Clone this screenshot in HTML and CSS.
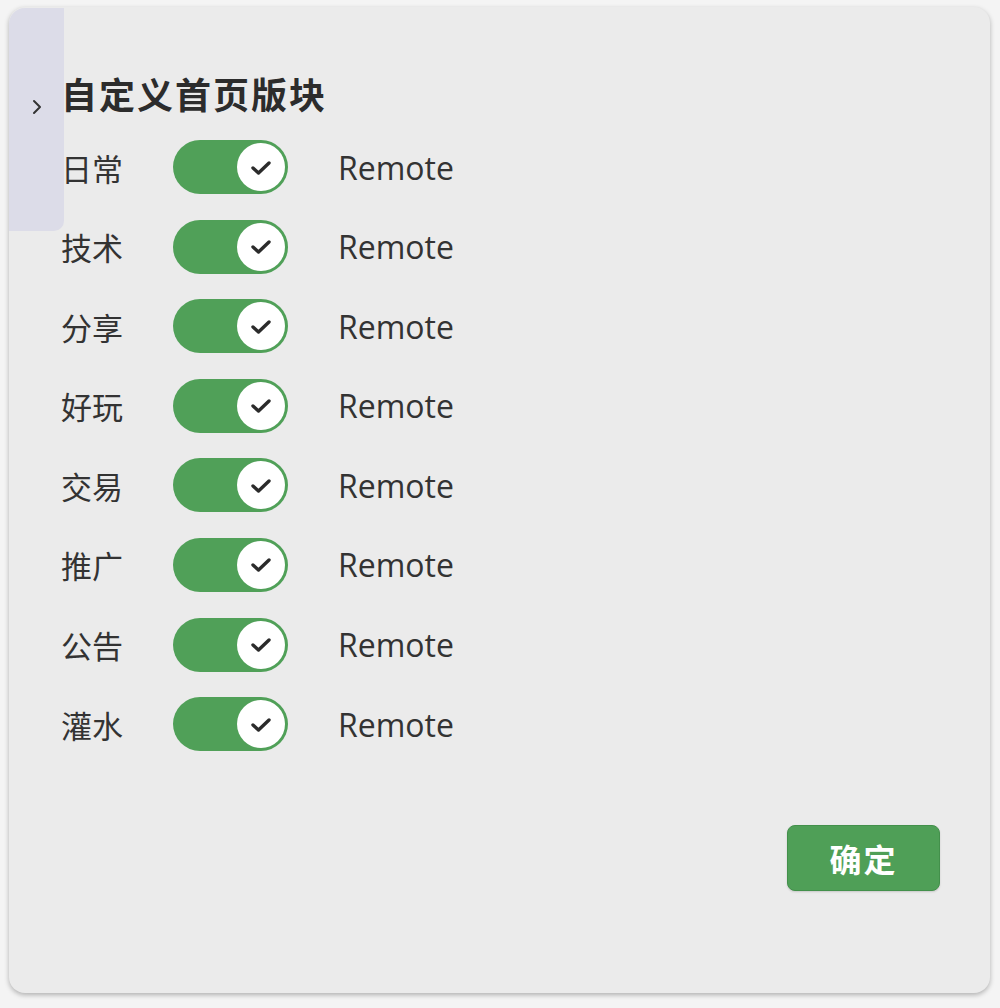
FILE: index.html
```html
<!DOCTYPE html>
<html lang="zh">
<head>
<meta charset="utf-8">
<link rel="stylesheet" href="styles.css">
</head>
<body>
<div class="panel">
  <div class="tab">
    <svg class="chev" width="12" height="16" viewBox="0 0 12 16"><polyline points="3,2 9,8 3,14" fill="none" stroke="#333" stroke-width="2" stroke-linecap="round" stroke-linejoin="round"/></svg>
  </div>
  <div class="content">
    <h1 class="title">自定义首页版块</h1>
    <div class="rows">
      <div class="row"><span class="label">日常</span><span class="toggle"><span class="knob"><svg width="22" height="18" viewBox="0 0 22 18"><polyline points="3,9 8.5,14 19,4" fill="none" stroke="#2b2b2b" stroke-width="3.4" stroke-linecap="round" stroke-linejoin="round"/></svg></span></span><span class="remote">Remote</span></div>
      <div class="row"><span class="label">技术</span><span class="toggle"><span class="knob"><svg width="22" height="18" viewBox="0 0 22 18"><polyline points="3,9 8.5,14 19,4" fill="none" stroke="#2b2b2b" stroke-width="3.4" stroke-linecap="round" stroke-linejoin="round"/></svg></span></span><span class="remote">Remote</span></div>
      <div class="row"><span class="label">分享</span><span class="toggle"><span class="knob"><svg width="22" height="18" viewBox="0 0 22 18"><polyline points="3,9 8.5,14 19,4" fill="none" stroke="#2b2b2b" stroke-width="3.4" stroke-linecap="round" stroke-linejoin="round"/></svg></span></span><span class="remote">Remote</span></div>
      <div class="row"><span class="label">好玩</span><span class="toggle"><span class="knob"><svg width="22" height="18" viewBox="0 0 22 18"><polyline points="3,9 8.5,14 19,4" fill="none" stroke="#2b2b2b" stroke-width="3.4" stroke-linecap="round" stroke-linejoin="round"/></svg></span></span><span class="remote">Remote</span></div>
      <div class="row"><span class="label">交易</span><span class="toggle"><span class="knob"><svg width="22" height="18" viewBox="0 0 22 18"><polyline points="3,9 8.5,14 19,4" fill="none" stroke="#2b2b2b" stroke-width="3.4" stroke-linecap="round" stroke-linejoin="round"/></svg></span></span><span class="remote">Remote</span></div>
      <div class="row"><span class="label">推广</span><span class="toggle"><span class="knob"><svg width="22" height="18" viewBox="0 0 22 18"><polyline points="3,9 8.5,14 19,4" fill="none" stroke="#2b2b2b" stroke-width="3.4" stroke-linecap="round" stroke-linejoin="round"/></svg></span></span><span class="remote">Remote</span></div>
      <div class="row"><span class="label">公告</span><span class="toggle"><span class="knob"><svg width="22" height="18" viewBox="0 0 22 18"><polyline points="3,9 8.5,14 19,4" fill="none" stroke="#2b2b2b" stroke-width="3.4" stroke-linecap="round" stroke-linejoin="round"/></svg></span></span><span class="remote">Remote</span></div>
      <div class="row"><span class="label">灌水</span><span class="toggle"><span class="knob"><svg width="22" height="18" viewBox="0 0 22 18"><polyline points="3,9 8.5,14 19,4" fill="none" stroke="#2b2b2b" stroke-width="3.4" stroke-linecap="round" stroke-linejoin="round"/></svg></span></span><span class="remote">Remote</span></div>
    </div>
    <div class="actions"><button class="ok">确定</button></div>
  </div>
</div>
</body>
</html>
```
FILE: styles.css
```css
html, body { margin: 0; padding: 0; }
body {
  background: #f4f4f4;
  font-family: "Open Sans", "Noto Sans CJK SC", sans-serif;
  color: #333;
  width: 1000px;
  height: 1008px;
  overflow: hidden;
}
.panel {
  position: relative;
  margin: 7px 10px 0 9px;
  height: 986px;
  background: #ebebeb;
  border-radius: 16px;
  box-shadow: 0 2px 5px rgba(0,0,0,0.28);
  box-sizing: border-box;
}
.tab {
  position: absolute;
  left: 0;
  top: 1px;
  width: 55px;
  height: 223px;
  background: #dcdce8;
  border-radius: 16px 0 10px 0;
}
.chev {
  position: absolute;
  left: 22px;
  top: 91px;
}
.content {
  padding: 63px 50px 0 52px;
}
.title {
  margin: 0;
  font-family: "Noto Sans CJK SC", sans-serif;
  font-size: 36px;
  font-weight: 700;
  line-height: 46px;
  letter-spacing: 2px;
  color: #2c2c2c;
}
.rows {
  display: flex;
  flex-direction: column;
  gap: 25.6px;
  margin-top: 24px;
}
.row {
  display: flex;
  align-items: center;
  height: 54px;
}
.label {
  width: 112px;
  font-family: "Noto Sans CJK SC", sans-serif;
  font-size: 31px;
  color: #333;
}
.toggle {
  display: flex;
  align-items: center;
  justify-content: flex-end;
  width: 115px;
  height: 54px;
  padding: 3px;
  box-sizing: border-box;
  background: #50a058;
  border-radius: 27px;
}
.knob {
  width: 48px;
  height: 48px;
  border-radius: 50%;
  background: #fff;
  display: flex;
  align-items: center;
  justify-content: center;
}
.knob svg { margin-top: 1px; }
.remote {
  margin-left: 50px;
  font-size: 32px;
  color: #333;
}
.actions {
  display: flex;
  justify-content: flex-end;
  margin-top: 74px;
}
.ok {
  width: 153px;
  height: 66px;
  border: 1px solid #43904b;
  border-radius: 8px;
  background: #4f9f57;
  color: #fff;
  font-family: "Noto Sans CJK SC", sans-serif;
  font-size: 32px;
  font-weight: 700;
  letter-spacing: 2px;
  padding: 0;
  box-shadow: 0 1px 2px rgba(0,0,0,0.15);
}
```
